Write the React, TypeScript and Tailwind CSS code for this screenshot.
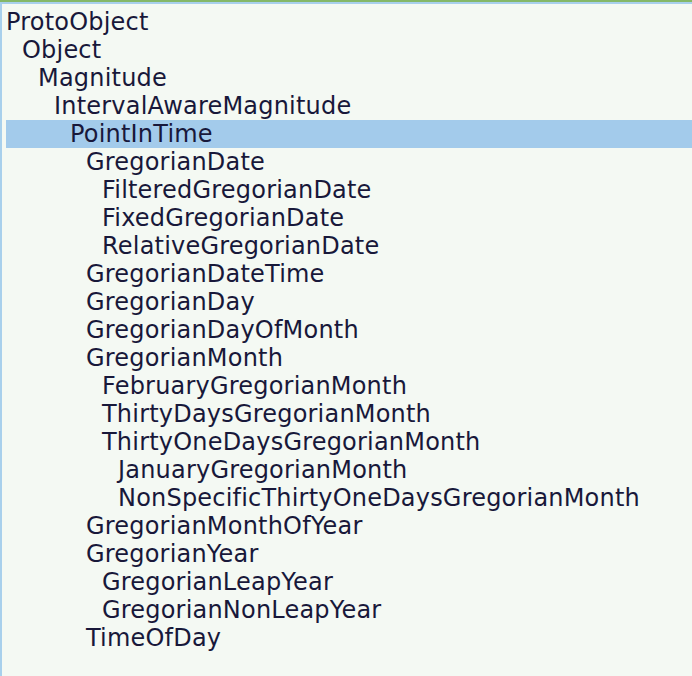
const rows: [string, number][] = [
  ["ProtoObject", 0],
  ["Object", 1],
  ["Magnitude", 2],
  ["IntervalAwareMagnitude", 3],
  ["PointInTime", 4],
  ["GregorianDate", 5],
  ["FilteredGregorianDate", 6],
  ["FixedGregorianDate", 6],
  ["RelativeGregorianDate", 6],
  ["GregorianDateTime", 5],
  ["GregorianDay", 5],
  ["GregorianDayOfMonth", 5],
  ["GregorianMonth", 5],
  ["FebruaryGregorianMonth", 6],
  ["ThirtyDaysGregorianMonth", 6],
  ["ThirtyOneDaysGregorianMonth", 6],
  ["JanuaryGregorianMonth", 7],
  ["NonSpecificThirtyOneDaysGregorianMonth", 7],
  ["GregorianMonthOfYear", 5],
  ["GregorianYear", 5],
  ["GregorianLeapYear", 6],
  ["GregorianNonLeapYear", 6],
  ["TimeOfDay", 5],
];

const indent = [
  "pl-0",
  "pl-[16px]",
  "pl-[32px]",
  "pl-[48px]",
  "pl-[64px]",
  "pl-[80px]",
  "pl-[96px]",
  "pl-[112px]",
];

export default function App() {
  return (
    <div className="w-[692px] h-[676px] overflow-hidden bg-[#f4f9f3] border-t-[2px] border-[#84b868]">
      <div className="h-full border-t-[2px] border-l-2 border-[#a8d0ec] pt-[4px] pl-[4px]">
        <ul className="font-['DejaVu_Sans',sans-serif] text-[24px] leading-[28px] tracking-[0.2px] text-[#18183a]">
          {rows.map(([name, level]) => (
            <li
              key={name}
              className={`h-[28px] whitespace-nowrap ${indent[level]} ${
                name === "PointInTime" ? "bg-[#a3cbeb]" : ""
              }`}
            >
              {name}
            </li>
          ))}
        </ul>
      </div>
    </div>
  );
}
